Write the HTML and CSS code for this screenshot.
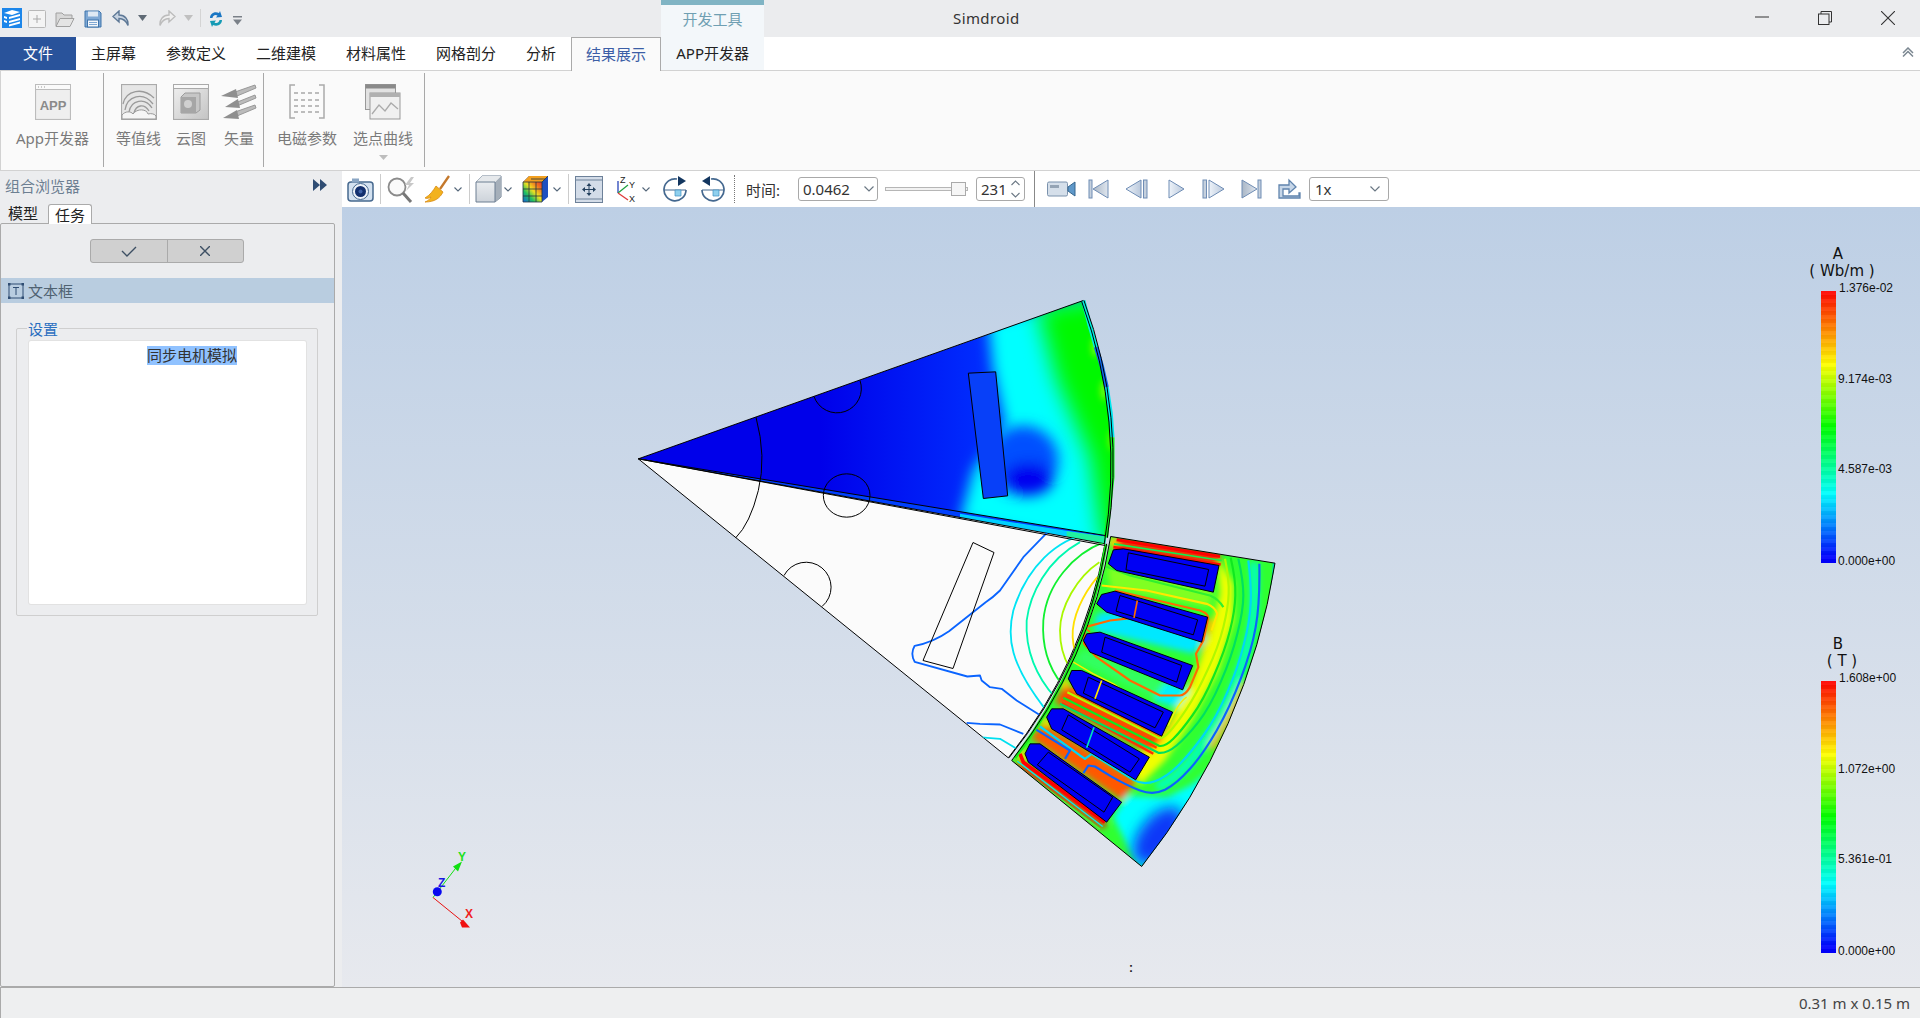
FILE: index.html
```html
<!DOCTYPE html>
<html lang="zh">
<head>
<meta charset="utf-8">
<title>Simdroid</title>
<link rel="stylesheet" href="styles.css">
</head>
<body>
<svg class="defs" width="0" height="0">
  <defs>
    <linearGradient id="navfill" x1="0" y1="0" x2="1" y2="0"><stop offset="0" stop-color="#eef3f9"/><stop offset="1" stop-color="#b9c8dc"/></linearGradient>
    <linearGradient id="navfillr" x1="0" y1="0" x2="1" y2="0"><stop offset="0" stop-color="#a9b6c6"/><stop offset="1" stop-color="#dfe6ee"/></linearGradient>
    <linearGradient id="rainbow" x1="0" y1="1" x2="1" y2="0"><stop offset="0" stop-color="#1060e0"/><stop offset=".3" stop-color="#20c060"/><stop offset=".55" stop-color="#f0e020"/><stop offset=".8" stop-color="#f07020"/><stop offset="1" stop-color="#e03030"/></linearGradient>
    <linearGradient id="cubefront" x1="0" y1="0" x2="0" y2="1"><stop offset="0" stop-color="#f2f4f6"/><stop offset="1" stop-color="#cdd3da"/></linearGradient>
    <linearGradient id="grayfade" x1="0" y1="0" x2="1" y2="1"><stop offset="0" stop-color="#f0f0f0"/><stop offset="1" stop-color="#c4c4c4"/></linearGradient>
    <linearGradient id="rotorbase" gradientUnits="userSpaceOnUse" x1="600" y1="0" x2="1120" y2="0"><stop offset="0" stop-color="#0000ea"/><stop offset="1" stop-color="#0030ff"/></linearGradient>
  </defs>
</svg>
<div class="app">
  <header class="titlebar">
    <div class="qat">
      <svg class="q-logo" viewBox="0 0 20 20"><rect width="20" height="20" fill="#1c86ea"/><path d="M2 5l8-3 8 2-8 3zM2 8l3 1v2l-3-1zM7 9l11-3v2l-11 3zM2 12l3 1v2l-3-1zM7 13l11-3v2l-11 3zM7 16.500l11-3v2l-11 3z" fill="#fff"/></svg>
      <svg class="q-new" viewBox="0 0 18 18"><rect x=".5" y=".5" width="17" height="17" rx="1" fill="#f4f4f4" stroke="#b8b8b8"/><path d="M9 5v8M5 9h8" stroke="#a8a8a8" fill="none"/></svg>
      <svg class="q-open" viewBox="0 0 20 17"><path d="M1 15V2h6l2 2h8v3" fill="#d8d8d8" stroke="#a0a0a0"/><path d="M1 15.500l4-8h14l-4 8z" fill="#e4e4e4" stroke="#a0a0a0"/></svg>
      <svg class="q-save" viewBox="0 0 18 18"><path d="M1 1h14l2 2v14H1z" fill="#7fa8d4" stroke="#3f74ab"/><rect x="4" y="1.500" width="10" height="5" fill="#dfe9f4"/><rect x="3.500" y="10" width="11" height="7" fill="#f4f7fa" stroke="#3f74ab"/><path d="M5 12.500h8M5 14.500h8" stroke="#7fa8d4"/></svg>
      <svg class="q-undo" viewBox="0 0 18 18"><path d="M7 1L1 6.500 7 12V8.500c4 0 7 2 9 7 .5-6-3-10.500-9-10.500z" fill="#c7d3e1" stroke="#5d7896" stroke-width="1.400"/></svg>
      <svg class="q-tri" viewBox="0 0 9 6"><path d="M0 0h9L4.500 6z" fill="#5f6a75"/></svg>
      <svg class="q-redo" viewBox="0 0 18 18"><path d="M11 1l6 5.500L11 12V8.500c-4 0-7 2-9 7-.5-6 3-10.500 9-10.500z" fill="#f0f0f0" stroke="#bcbcbc" stroke-width="1.400"/></svg>
      <svg class="q-tri2" viewBox="0 0 9 6"><path d="M0 0h9L4.500 6z" fill="#c0c0c0"/></svg>
      <span class="q-sep"></span>
      <svg class="q-sync" viewBox="0 0 16 18"><path d="M2 8c0-4 4-7 9-5l1-2 2 6-6 .5 1.500-2C7 4 4.500 6 4.500 8z" fill="#1976c4"/><path d="M14 10c0 4-4 7-9 5l-1 2-2-6 6-.5L6.500 12.500C9 14 11.500 12 11.500 10z" fill="#159bb5"/></svg>
      <svg class="q-more" viewBox="0 0 9 9"><path d="M0 0h9v1.500H0z" fill="#7a8088"/><path d="M0 3.500h9L4.500 9z" fill="#7a8088"/></svg>
    </div>
    <div class="ctx-head">开发工具</div>
    <div class="app-title">Simdroid</div>
    <div class="winctl">
      <svg class="w-min" viewBox="0 0 14 14"><path d="M0 7h14" stroke="#333" fill="none"/></svg>
      <svg class="w-max" viewBox="0 0 14 14"><path d="M3 3V.500h10.500V11H11" stroke="#333" fill="none"/><rect x=".5" y="3" width="10.500" height="10.500" fill="none" stroke="#333"/></svg>
      <svg class="w-close" viewBox="0 0 14 14"><path d="M0 0l14 14M14 0L0 14" stroke="#333" fill="none" stroke-width="1.100"/></svg>
    </div>
  </header>

  <nav class="tabs">
    <div class="tab-file">文件</div>
    <div class="tab">主屏幕</div>
    <div class="tab">参数定义</div>
    <div class="tab">二维建模</div>
    <div class="tab">材料属性</div>
    <div class="tab">网格剖分</div>
    <div class="tab">分析</div>
    <div class="tab tab-active">结果展示</div>
    <div class="tab tab-ctx">APP开发器</div>
    <svg class="collapse" viewBox="0 0 12 10"><path d="M1 6l5-5 5 5M1 9.500l5-5 5 5" fill="none" stroke="#7b8791" stroke-width="1.500"/></svg>
  </nav>

  <section class="ribbon">
    <div class="rgroup rg1">
      <div class="ritem">
        <svg class="ricon" viewBox="0 0 36 36"><rect x=".5" y=".5" width="35" height="35" fill="#efefef" stroke="#bcbcbc" stroke-width="1.200"/><rect x=".5" y=".5" width="35" height="5" fill="#fafafa" stroke="#bcbcbc"/><path d="M3 3h1M6 3h1M9 3h1" stroke="#999"/><text x="18" y="26" class="appglyph">APP</text></svg>
        <span>App开发器</span>
      </div>
    </div>
    <div class="rgroup rg2">
      <div class="ritem">
        <svg class="ricon" viewBox="0 0 36 36"><rect x=".5" y=".5" width="35" height="35" fill="#e6e6e6" stroke="#aaa" stroke-width="1.200"/><path d="M2 20C5 6 22 3 33 14M4 26C6 12 22 7 32 20M8 28c2-12 16-15 23-4M13 29c2-8 10-10 15-2" fill="none" stroke="#9a9a9a" stroke-width="1.300"/><path d="M1 35v-4c3-4 9-4 11-1 4-6 14-5 15 0 3-1 7 0 8 2v3z" fill="#f5f5f5" stroke="#999"/></svg>
        <span>等值线</span>
      </div>
      <div class="ritem">
        <svg class="ricon" viewBox="0 0 36 36"><rect x=".5" y=".5" width="35" height="35" fill="url(#grayfade)" stroke="#aaa" stroke-width="1.200"/><rect x=".5" y=".5" width="35" height="4" fill="#fafafa" stroke="#aaa"/><path d="M8 13l4-4h15v17l-4 3H8z" fill="#c6c6c6" stroke="#9c9c9c"/><path d="M8 13h15v16H8z" fill="#a6a6a6"/><circle cx="15" cy="20" r="4" fill="#d0d0d0"/></svg>
        <span>云图</span>
      </div>
      <div class="ritem">
        <svg class="ricon" viewBox="0 0 36 36"><g fill="#bbb" stroke="#999"><path d="M14 8l20-7 1 3-19 8z"/><path d="M14 19l20-8 1 3-19 8z"/><path d="M14 28l20-7 1 3-19 8z"/></g><g fill="#8f8f8f"><path d="M0 12l15-7 2 9z"/><path d="M4 23l13-8 2 9z"/><path d="M2 34l14-8 2 9z"/></g></svg>
        <span>矢量</span>
      </div>
    </div>
    <div class="rgroup rg3">
      <div class="ritem">
        <svg class="ricon" viewBox="0 0 36 36"><path d="M6 1H1v33h5M30 1h5v33h-5" fill="none" stroke="#aaa" stroke-width="1.500"/><path d="M5 9h26M5 16h26M5 22h26M5 28h26" stroke="#a8a8a8" stroke-width="1.400" stroke-dasharray="4 3" fill="none"/></svg>
        <span>电磁参数</span>
      </div>
      <div class="ritem">
        <svg class="ricon" viewBox="0 0 36 36"><rect x=".5" y=".5" width="30" height="25" fill="#e2e2e2" stroke="#999"/><rect x=".5" y=".5" width="30" height="4" fill="#8a8a8a"/><rect x="5" y="9" width="30" height="26" fill="#f0f0f0" stroke="#999"/><rect x="5" y="9" width="30" height="4" fill="#b0b0b0"/><path d="M7 30l7-9 6 6 6-8 7 6" fill="none" stroke="#aaa" stroke-width="1.300"/></svg>
        <span>选点曲线</span>
        <svg class="rdrop" viewBox="0 0 9 5"><path d="M0 0h9L4.500 5z" fill="#bdbdbd"/></svg>
      </div>
    </div>
  </section>

  <main class="main">
    <aside class="dock">
      <div class="dock-head">
        <span>组合浏览器</span>
        <svg class="dock-arrows" viewBox="0 0 14 12"><path d="M0 0l7 6-7 6zM7 0l7 6-7 6z" fill="#2f4d73"/></svg>
      </div>
      <div class="dock-tabs">
        <span class="dtab">模型</span>
        <span class="dtab dtab-on">任务</span>
      </div>
      <div class="dock-box">
        <div class="btnpair">
          <div class="okbtn"><svg class="glyph-ok" viewBox="0 0 16 11"><path d="M1 5l5 5 9-9" fill="none" stroke="#3d4f63" stroke-width="1.400"/></svg></div>
          <div class="okbtn"><svg class="glyph-x" viewBox="0 0 10 10"><path d="M0 0l10 10M10 0L0 10" fill="none" stroke="#3d4f63" stroke-width="1.400"/></svg></div>
        </div>
        <div class="taskbar">
          <svg class="t-icon" viewBox="0 0 16 16"><rect x="1" y="1" width="14" height="14" fill="none" stroke="#2f4d73"/><g fill="#2f4d73"><rect width="2.500" height="2.500"/><rect x="13.500" width="2.500" height="2.500"/><rect y="13.500" width="2.500" height="2.500"/><rect x="13.500" y="13.500" width="2.500" height="2.500"/></g><path d="M5 4.500h6M8 4.500v7.500" stroke="#2f4d73" fill="none"/></svg>
          <span>文本框</span>
        </div>
        <div class="group">
          <div class="legend">设置</div>
          <div class="textedit"><span class="selected">同步电机模拟</span></div>
        </div>
      </div>
    </aside>

    <div class="work">
      <div class="toolbar">
        <svg class="ti s-cam" viewBox="0 0 27 25"><rect x="1" y="5" width="25" height="19" rx="3" fill="#d3e1f0" stroke="#47698f" stroke-width="1.500"/><rect x="5" y="1.500" width="7" height="4" fill="#8aa6c4"/><circle cx="13.500" cy="14.500" r="8" fill="#eef3f9" stroke="#47698f"/><circle cx="13.500" cy="14.500" r="5.500" fill="#13306e"/><circle cx="13.500" cy="14.500" r="2" fill="#3f63a8"/></svg>
        <span class="vsep"></span>
        <svg class="ti s-mag" viewBox="0 0 29 27"><circle cx="10" cy="11" r="8.500" fill="#fafafa" stroke="#8b8b8b" stroke-width="1.800"/><path d="M16 17l8 9" stroke="#777" stroke-width="3" fill="none"/><path d="M24 1l-6 8h4l-3 6 8-8h-4l4-6z" fill="#c8c8c8"/></svg>
        <svg class="ti s-broom" viewBox="0 0 26 28"><path d="M25 1l-9 13" stroke="#c4782b" stroke-width="2.300" fill="none"/><path d="M12 11l7 6c-3 6-8 10-18 10 3-1 5-3 6-5-2 1-4 2-6 1 5-3 8-7 11-12z" fill="#f2b21e" stroke="#d88a14" stroke-width=".8"/></svg>
        <svg class="chev" viewBox="0 0 8 5"><path d="M.5.500L4 4 7.500.500" fill="none" stroke="#55677a" stroke-width="1.100"/></svg>
        <span class="vsep"></span>
        <svg class="ti s-cube" viewBox="0 0 27 28"><path d="M1 7l6-6h19v21l-6 5H1z" fill="url(#cubefront)" stroke="#6d7f92"/><path d="M20 7l6-6v21l-6 5z" fill="#a5afba"/><path d="M1 7l6-6h19l-6 6z" fill="#e6e9ec"/><path d="M1 7h19v20" fill="none" stroke="#6d7f92"/></svg>
        <svg class="chev" viewBox="0 0 8 5"><path d="M.5.500L4 4 7.500.500" fill="none" stroke="#55677a" stroke-width="1.100"/></svg>
        <svg class="ti s-cube" viewBox="0 0 27 28"><path d="M1 7l6-6h19v21l-6 5H1z" fill="#1e4fc0"/><path d="M1 7h19v20H1z" fill="url(#rainbow)"/><path d="M1 7l6-6h19l-6 6z" fill="#f2a020"/><path d="M1 14h19M1 21h19M7 7v20M14 7v20M20 7l6-6M9 4h14" stroke="#24323f" fill="none" stroke-width=".8"/><path d="M1 7h19v20H1z" fill="none" stroke="#24323f" stroke-width=".8"/></svg>
        <svg class="chev" viewBox="0 0 8 5"><path d="M.5.500L4 4 7.500.500" fill="none" stroke="#55677a" stroke-width="1.100"/></svg>
        <span class="vsep"></span>
        <svg class="ti s-fit" viewBox="0 0 28 27"><rect x=".5" y=".5" width="27" height="26" fill="#d3dce8" stroke="#6d8199"/><path d="M.5 4h27M.5 23h27" stroke="#6d8199" fill="none"/><path d="M14 7l2.500 3h-5zM14 20l2.500-3h-5zM7 13.500l3-2.500v5zM21 13.500L18 11v5z" fill="#24415f"/><path d="M14 10v7M10 13.500h8" stroke="#24415f" fill="none"/></svg>
        <svg class="ti s-axis" viewBox="0 0 25 30"><path d="M5 19V7" stroke="#2744b8" stroke-width="1.300" fill="none"/><path d="M5 19l10-8" stroke="#1ca03c" stroke-width="1.300" fill="none"/><path d="M5 19l10 7" stroke="#e03a3a" stroke-width="1.300" fill="none"/><text x="7" y="9" class="axglyph">Z</text><text x="16" y="14" class="axglyph">Y</text><text x="16" y="28" class="axglyph">X</text></svg>
        <svg class="chev" viewBox="0 0 8 5"><path d="M.5.500L4 4 7.500.500" fill="none" stroke="#55677a" stroke-width="1.100"/></svg>
        <svg class="ti s-rot" viewBox="0 0 26 26"><path d="M15 3A11 11 0 1 0 24 14" fill="none" stroke="#44688f" stroke-width="1.700"/><path d="M16 0l8 5-8 5z" fill="#13365f"/><path d="M2 14h22" stroke="#44688f"/><path d="M13 14h6v6h-6z" fill="#8fd0ee" stroke="#3f8fc0" stroke-width=".7"/></svg>
        <svg class="ti s-rot" viewBox="0 0 26 26"><path d="M11 3A11 11 0 1 1 2 14" fill="none" stroke="#44688f" stroke-width="1.700"/><path d="M10 0L2 5l8 5z" fill="#13365f"/><path d="M2 14h22" stroke="#44688f"/><path d="M13 14h6v6h-6z" fill="#8fd0ee" stroke="#3f8fc0" stroke-width=".7"/></svg>
        <span class="dotsep"></span>
        <span class="tlabel">时间:</span>
        <div class="combo combo-time"><span>0.0462</span><svg class="cchev" viewBox="0 0 10 6"><path d="M.5.500L5 5 9.500.500" fill="none" stroke="#6b7884" stroke-width="1.200"/></svg></div>
        <div class="slider"><div class="strack"></div><div class="shandle"></div></div>
        <div class="spin"><span>231</span><svg class="sarrows" viewBox="0 0 9 18"><path d="M.5 5L4.500 1l4 4M.5 13l4 4 4-4" fill="none" stroke="#6b7884" stroke-width="1.100"/></svg></div>
        <span class="vsep vsep-long"></span>
        <svg class="ti s-video" viewBox="0 0 29 16"><rect x=".5" y="1" width="20" height="14" rx="1.500" fill="#d5dfea" stroke="#7b92ad"/><rect x="3" y="4" width="9" height="3" fill="#95a4b5"/><path d="M21 6l7-5v14l-7-5z" fill="#5f98c9" stroke="#36678f"/></svg>
        <svg class="ti s-nav" viewBox="0 0 21 20"><rect x="1" y="1" width="3" height="18" fill="#c5d0dd" stroke="#6f8db5"/><path d="M20 1v18L5 10z" fill="url(#navfillr)" stroke="#6f8db5"/></svg>
        <svg class="ti s-nav2" viewBox="0 0 23 20"><path d="M16 1v18L1 10z" fill="url(#navfill)" stroke="#6f8db5"/><rect x="18.500" y="1" width="3.500" height="18" fill="#c5d0dd" stroke="#6f8db5"/></svg>
        <svg class="ti s-play" viewBox="0 0 18 20"><path d="M1 1v18l15-9z" fill="url(#navfill)" stroke="#6f8db5"/></svg>
        <svg class="ti s-nav2" viewBox="0 0 23 20"><rect x="1" y="1" width="3.500" height="18" fill="#c5d0dd" stroke="#6f8db5"/><path d="M7 1v18l15-9z" fill="url(#navfill)" stroke="#6f8db5"/></svg>
        <svg class="ti s-nav" viewBox="0 0 21 20"><path d="M1 1v18l15-9z" fill="url(#navfillr)" stroke="#6f8db5"/><rect x="17" y="1" width="3" height="18" fill="#c5d0dd" stroke="#6f8db5"/></svg>
        <svg class="ti s-exp" viewBox="0 0 23 22"><path d="M1 7h10V2l7 7-7 6v-4H5v7h16v-3h1v5H1z" fill="#c6d6e8" stroke="#6084ad" stroke-width="1.300"/></svg>
        <div class="combo combo-speed"><span>1x</span><svg class="cchev" viewBox="0 0 10 6"><path d="M.5.500L5 5 9.500.500" fill="none" stroke="#6b7884" stroke-width="1.200"/></svg></div>
      </div>

      <div class="viewport">
        <svg class="scene" viewBox="342 207 1578 779">
          <defs>
            <filter id="blur6" filterUnits="userSpaceOnUse" x="-300" y="-300" width="2400" height="2000"><feGaussianBlur stdDeviation="32"/></filter>
            <filter id="blur4" filterUnits="userSpaceOnUse" x="-300" y="-300" width="2400" height="2000"><feGaussianBlur stdDeviation="20"/></filter>
            <filter id="blur2" filterUnits="userSpaceOnUse" x="-300" y="-300" width="2400" height="2000"><feGaussianBlur stdDeviation="10"/></filter>
            <clipPath id="rotorclip"><path d="M55 505L1390 30A1420 1420 0 0 1 1455 765Z"/></clipPath>
            <clipPath id="statorclip"><path d="M392 48L885 128A1940 1940 0 0 1 485 1038L95 720A1438 1438 0 0 0 392 48Z"/></clipPath>
            <clipPath id="whiteclip"><path d="M-1025-185L375 70A1428 1428 0 0 1 85 712Z"/></clipPath>
          </defs>

          <!-- rotor: field sector -->
          <g transform="translate(620 290) scale(.33333)">
            <g clip-path="url(#rotorclip)">
              <path d="M55 505L1390 30A1420 1420 0 0 1 1455 765Z" fill="url(#rotorbase)"/>
              <path d="M1105 90L1118 230 1155 400 1060 540 1020 690 1520 790 1520 0z" fill="#00ffff" filter="url(#blur4)"/>
              <path d="M1250 50L1310 270 1410 500 1450 770 1560 770 1560 0z" fill="#00f800" filter="url(#blur6)"/>
              <g filter="url(#blur4)">
                <ellipse cx="1210" cy="510" rx="105" ry="105" fill="#0050ff"/>
                <ellipse cx="1225" cy="565" rx="75" ry="50" fill="#0000f0"/>
              </g>
              <g filter="url(#blur2)" fill="#80ff10">
                <ellipse cx="1425" cy="170" rx="10" ry="30"/>
                <ellipse cx="1452" cy="300" rx="10" ry="30"/>
                <ellipse cx="1475" cy="450" rx="8" ry="30"/>
              </g>
              <path d="M55 505L1455 735 1455 765Z" fill="#0040ff"/>
              <path d="M1020 670L1300 715 1455 738 1455 765 1020 690z" fill="#00d0ff"/>
              <path d="M1340 722L1455 738 1455 765 1340 745z" fill="#20f0a0"/>
            </g>
            <path d="M1390 30L1408 100 1428 170" fill="none" stroke="#00f0e0" stroke-width="13"/>
            <path d="M1428 170L1445 225 1460 290" fill="none" stroke="#0f6cf0" stroke-width="13"/>
            <path d="M1460 290L1472 370 1477 440" fill="none" stroke="#00e8f0" stroke-width="13"/>
            <path d="M1477 440L1477 560 1458 740" fill="none" stroke="#10f020" stroke-width="13"/>
            <path d="M1045 248L1127 244 1163 616 1090 624z" fill="#0840f8" stroke="#000" stroke-width="3"/>
            <g fill="none" stroke="#000" stroke-width="3">
              <path d="M55 505L1390 30"/>
              <path d="M55 505L1455 735"/>
              <path d="M1385 33A1412 1412 0 0 1 1452 765"/>
              <path d="M1392 30A1430 1430 0 0 1 1462 742"/>
              <path d="M582 318A70 70 0 0 0 720 270"/>
            </g>
          </g>

          <!-- white half and stator -->
          <g transform="translate(980 520) scale(.33333)">
            <path d="M-1025-185L375 70A1428 1428 0 0 1 85 712Z" fill="#fbfbfb" stroke="#000" stroke-width="3"/>
            <g clip-path="url(#whiteclip)" fill="none" stroke-width="5.500" stroke-linejoin="round">
              <path d="M215 22L130 110 60 210Q40 230 17 245L-93 332Q-140 365 -196 376Q-210 400 -196 424L-38 468 0 465 5 480 30 500 65 505 110 540 190 590" stroke="#0a64ff"/>
              <path d="M-40 607L0 610 60 612 130 640" stroke="#0a64ff"/>
              <path d="M-5 650L60 655 110 685" stroke="#00e0f0"/>
              <path d="M332 38C230 55 140 140 100 270C80 350 90 430 195 565" stroke="#00e4f4"/>
              <path d="M300 65C200 120 150 220 140 300C135 390 170 470 225 530" stroke="#00f8b0"/>
              <path d="M372 65C280 100 200 190 190 300C185 380 205 440 245 490" stroke="#10f030"/>
              <path d="M358 125C290 170 240 260 240 330C240 380 250 410 268 440" stroke="#a8f800"/>
              <path d="M352 170C310 220 275 290 278 350C280 380 285 400 295 415" stroke="#ffe000"/>
            </g>

            <g clip-path="url(#statorclip)">
              <rect x="-20" y="-20" width="1000" height="1100" fill="#30ff30"/>
              <g filter="url(#blur2)">
                <path d="M712 110L760 190 760 300 715 450 635 600 555 720 480 795 450 725 560 620 640 470 690 340 720 220z" fill="#f0ff00"/>
                <path d="M700 300L640 480 560 640 530 660 600 560 660 420 680 290z" fill="#ffa000"/>
                <path d="M400 890L440 825 560 830 640 790 750 700 720 800 480 1050z" fill="#00ffff"/>
                <path d="M380 135L700 210 690 260 390 205z" fill="#80ff20"/>
                <path d="M350 280L410 270 680 350 640 400 340 330z" fill="#00e8ff"/>
                <path d="M310 385L620 510 580 560 280 420z" fill="#30ff60"/>
                <path d="M560 480L630 510 590 560 520 540z" fill="#00f0ff"/>
                <path d="M255 490L550 650 510 700 225 545z" fill="#ff4800"/>
                <path d="M195 610L470 780 425 840 150 650z" fill="#ff5800"/>
                <path d="M400 50L720 100 715 135 400 85z" fill="#ff2000"/>
                <path d="M120 720L380 905 370 925 105 735z" fill="#ff1000"/>
                <path d="M790 480L800 500 770 570 700 690 685 680 762 540z" fill="#ffb000"/>
                <ellipse cx="130" cy="705" rx="15" ry="18" fill="#ffe000"/>
                <ellipse cx="198" cy="605" rx="14" ry="14" fill="#ffe000"/>
                <ellipse cx="255" cy="490" rx="14" ry="14" fill="#ffd000"/>
                <ellipse cx="400" cy="65" rx="14" ry="14" fill="#ffe000"/>
                <path d="M822 125Q828 250 815 330Q800 400 765 495Q730 585 690 640Q650 705 610 745Q570 785 530 800" fill="none" stroke="#00ffc0" stroke-width="26"/>
              </g>
              <ellipse cx="535" cy="945" rx="55" ry="100" transform="rotate(38 535 945)" fill="#0838f8" filter="url(#blur4)"/>
              <path d="M885 128L880 200" stroke="#00e0a0" stroke-width="14" fill="none"/>

              <g fill="none" stroke-linejoin="round" stroke-width="6.500">
                <polyline points="410,58 720,108" stroke="#ff0000" stroke-width="9"/>
                <polyline points="402,70 725,120" stroke="#10f050" stroke-width="5"/>
                <polyline points="400,80 722,132" stroke="#ff1000" stroke-width="8"/>
                <polyline points="395,92 410,90" stroke="#30f060" stroke-width="4"/>
                <polyline points="120,700 130,725 375,905" stroke="#ff0000" stroke-width="11"/>
                <polyline points="112,722 368,918" stroke="#00f0f0" stroke-width="4"/>
                <polyline points="100,728 360,926" stroke="#40ff40" stroke-width="4"/>
                <polyline points="272,506 540,650" stroke="#ff7000" stroke-width="9"/>
                <polyline points="258,530 530,682" stroke="#ff4000" stroke-width="7"/>
                <polyline points="245,548 520,700" stroke="#ff3000" stroke-width="7"/>
                <path d="M735 115Q748 180 746 220Q745 260 730 320Q715 380 682 450Q650 520 620 565Q590 610 570 632Q550 655 535 652L262 515" stroke="#b0f800"/>
                <path d="M752 112Q768 180 766 225Q765 270 750 330Q735 390 702 465Q670 540 637 585Q605 630 580 655Q555 680 537 676L250 532" stroke="#10e820"/>
                <path d="M775 115Q790 180 790 225Q790 270 772 340Q755 410 722 485Q690 560 655 605Q620 650 590 675Q560 700 535 697L240 550" stroke="#00e060"/>
                <path d="M805 120Q815 200 812 250Q810 300 792 370Q775 440 742 515Q710 590 670 645Q630 700 595 735Q560 770 525 782Q490 795 460 778L335 700 315 715 300 705 180 618" stroke="#00d8f4"/>
                <path d="M838 130Q840 250 827 320Q815 390 782 475Q750 560 710 630Q670 700 630 745Q590 790 555 808Q520 825 480 810Q440 795 392 767L345 738 325 735 310 758" stroke="#0a64ff"/>
                <polyline points="165,625 270,690 255,715" stroke="#0a64ff"/>
                <path d="M378 138L450 165 690 225Q715 235 730 260" stroke="#30f030"/>
                <path d="M365 195L500 210 680 250Q705 260 712 280L695 330" stroke="#ffe800"/>
                <path d="M405 210L660 270Q690 280 683 300L670 360 648 400 655 440 630 500Q615 525 600 525L540 525 450 480 350 410 312 370 315 320 390 300 460 292" stroke="#ff6a00"/>
                <polyline points="280,425 340,460 400,490 560,595" stroke="#ffe800" stroke-width="4"/>
                <path d="M620 530Q595 545 565 615" stroke="#f8f000" stroke-width="4"/>
              </g>

              <g fill="#0000f4" stroke="#000" stroke-width="3" stroke-linejoin="round">
                <path d="M400 88L430 85 717 135 700 215 410 150 385 130z"/>
                <path d="M365 222L405 212 683 290 665 365 380 275 350 250z"/>
                <path d="M320 340L360 335 638 435 608 508 330 395 310 360z"/>
                <path d="M275 450L305 450 578 575 545 647 290 520 265 475z"/>
                <path d="M215 565L250 565 508 710 467 778 215 625 200 590z"/>
                <path d="M150 670L180 670 425 845 380 905 145 725 135 700z"/>
              </g>
              <g fill="none" stroke="#000" stroke-width="3" stroke-linejoin="round">
                <path d="M445 97L686 147 675 197 438 148z"/>
                <path d="M420 225L653 298 640 343 408 272z"/>
                <path d="M375 350L605 435 590 485 365 395z"/>
                <path d="M325 470L550 575 525 622 310 518z"/>
                <path d="M265 583L478 715 450 755 245 628z"/>
                <path d="M205 695L398 830 372 875 172 733z"/>
              </g>
              <g fill="none" stroke-width="5">
                <path d="M472 240L462 292" stroke="#ff6a00"/>
                <path d="M365 480L345 535" stroke="#ffe800"/>
                <path d="M342 620L320 682" stroke="#00e0c0"/>
                <path d="M312 320L330 335" stroke="#ff6a00"/>
              </g>
            </g>
            <path d="M378 72A1448 1448 0 0 1 105 712" fill="none" stroke="#18f018" stroke-width="9"/>
            <path d="M392 48L885 128A1940 1940 0 0 1 485 1038L95 720" fill="none" stroke="#000" stroke-width="3"/>
            <path d="M392 48A1438 1438 0 0 1 95 720" fill="none" stroke="#000" stroke-width="3"/>
            <path d="M380 70A1424 1424 0 0 1 87 712" fill="none" stroke="#000" stroke-width="3"/>
          </g>

          <!-- rotor outlines that lie across both halves -->
          <g transform="translate(620 290) scale(.33333)" fill="none" stroke="#000" stroke-width="3">
            <path d="M55 505L1455 765"/>
            <ellipse cx="680" cy="615" rx="70" ry="65"/>
            <path d="M408 380Q440 500 415 600T347 742"/>
          </g>
          <g fill="none" stroke="#000" stroke-width="1">
            <path d="M973 542L994 552 953 668 923 660z"/>
            <path d="M784 575A25 25 0 1 1 822 606"/>
          </g>

          <!-- axes triad -->
          <g>
            <path d="M433 897L457 866" stroke="#10e010" fill="none"/>
            <path d="M433 897L465 923" stroke="#e81010" fill="none"/>
            <path d="M453 866L462 861 458 871z" fill="#10e010"/>
            <path d="M460 922L463 919 470 927 462 927z" fill="#f01010"/>
            <circle cx="437.300" cy="891.300" r="4.500" fill="#0808f0"/>
            <text x="438" y="886" class="ax ax-z">Z</text>
            <text x="458" y="860" class="ax ax-y">Y</text>
            <text x="465" y="917" class="ax ax-x">X</text>
          </g>
        </svg>

        <div class="legendbar legend-a">
          <div class="lg-title"><span class="lg-name">A</span><br>( Wb/m )</div>
          <div class="lg-bar"></div>
          <span class="lg-t lg-t1">1.376e-02</span>
          <span class="lg-t lg-t2">9.174e-03</span>
          <span class="lg-t lg-t3">4.587e-03</span>
          <span class="lg-t lg-t4">0.000e+00</span>
        </div>
        <div class="legendbar legend-b">
          <div class="lg-title"><span class="lg-name">B</span><br>( T )</div>
          <div class="lg-bar"></div>
          <span class="lg-t lg-t1">1.608e+00</span>
          <span class="lg-t lg-t2">1.072e+00</span>
          <span class="lg-t lg-t3">5.361e-01</span>
          <span class="lg-t lg-t4">0.000e+00</span>
        </div>
        <span class="dotmark">:</span>
      </div>
    </div>
  </main>

  <footer class="status"><span>0.31 m x 0.15 m</span></footer>
</div>
</body>
</html>
```

FILE: styles.css
```css
* { box-sizing: border-box; }
html, body { margin: 0; padding: 0; }
body {
  width: 1920px;
  height: 1018px;
  overflow: hidden;
  font-family: "Noto Sans", "Noto Sans CJK SC", sans-serif;
  font-size: 15px;
  color: #222;
  background: #ecedef;
}
.defs { position: absolute; }
.app { display: flex; flex-direction: column; height: 1018px; }
svg { display: block; flex: none; }

/* title bar */
.titlebar { height: 37px; display: flex; background: #ebecee; flex: none; }
.qat { width: 661px; display: flex; align-items: flex-start; }
.q-logo { width: 20px; height: 20px; margin: 8px 0 0 2px; }
.q-new { width: 18px; height: 18px; margin: 10px 0 0 6px; }
.q-open { width: 20px; height: 17px; margin: 11px 0 0 9px; }
.q-save { width: 18px; height: 18px; margin: 10px 0 0 9px; }
.q-undo { width: 18px; height: 18px; margin: 10px 0 0 10px; }
.q-tri { width: 9px; height: 6px; margin: 15px 0 0 8px; }
.q-redo { width: 18px; height: 18px; margin: 10px 0 0 11px; }
.q-tri2 { width: 9px; height: 6px; margin: 15px 0 0 8px; }
.q-sep { width: 1px; height: 18px; margin: 9px 0 0 7px; background: #d4d4d4; }
.q-sync { width: 16px; height: 18px; margin: 10px 0 0 7px; }
.q-more { width: 9px; height: 9px; margin: 16px 0 0 9px; }
.ctx-head {
  width: 103px;
  background: #f3f7fa;
  border-top: 5px solid #80b4c4;
  color: #6f9fb2;
  text-align: center;
  line-height: 28px;
}
.app-title {
  margin-left: 189px;
  line-height: 37px;
  font-family: "Noto Sans", sans-serif;
  font-size: 15px;
  letter-spacing: .4px;
  color: #333;
}
.winctl { margin-left: auto; display: flex; align-items: flex-start; }
.w-min { width: 14px; height: 14px; margin: 10px 0 0; }
.w-max { width: 14px; height: 14px; margin: 11px 0 0 49px; }
.w-close { width: 14px; height: 14px; margin: 11px 25px 0 49px; }

/* ribbon tabs */
.tabs { height: 33px; display: flex; background: #fff; flex: none; position: relative; }
.tab-file {
  width: 76px;
  background: #29539b;
  color: #fff;
  text-align: center;
  line-height: 33px;
}
.tab { padding: 0 15px; line-height: 33px; color: #222; white-space: nowrap; }
.tab-active {
  height: 34px;
  padding: 0 14px;
  line-height: 32px;
  background: #fafafa;
  color: #3c5ea6;
  border: 1px solid #aaa;
  border-bottom: 0;
  position: relative;
  z-index: 2;
}
.tab-ctx { background: #f3f7fa; width: 103px; padding: 0; text-align: center; }
.collapse { width: 12px; height: 10px; margin: 10px 6px 0 auto; }

/* ribbon body */
.ribbon {
  height: 101px;
  display: flex;
  flex: none;
  background: #fafafa;
  border-top: 1px solid #d2d2d2;
  border-bottom: 1px solid #d2d2d2;
  border-left: 1px solid #d2d2d2;
}
.rgroup { display: flex; height: 94px; margin-top: 2px; border-right: 1px solid #a8a8a8; flex: none; }
.rg1 { width: 103px; padding-left: 15px; }
.rg2 { width: 160px; padding-left: 12px; gap: 12px; }
.rg3 { width: 161px; padding-left: 13px; gap: 16px; }
.ritem { display: flex; flex-direction: column; align-items: center; color: #7a7a7a; line-height: 20px; flex: none; white-space: nowrap; }
.ricon { width: 36px; height: 36px; margin: 11px 0 8px; }
.rdrop { width: 9px; height: 5px; margin-top: 7px; }
.appglyph { font: bold 13px "Liberation Sans", sans-serif; fill: #8a8a8a; text-anchor: middle; }

/* main */
.main { flex: 1; display: flex; min-height: 0; }
.dock { width: 342px; flex: none; display: flex; flex-direction: column; background: #ecedef; }
.dock-head {
  height: 33px;
  flex: none;
  display: flex;
  align-items: center;
  padding: 0 15px 5px 5px;
  justify-content: space-between;
  color: #6d7f92;
}
.dock-arrows { width: 14px; height: 12px; }
.dock-tabs { height: 20px; flex: none; display: flex; padding-left: 8px; position: relative; z-index: 2; }
.dtab { line-height: 19px; width: 40px; color: #222; }
.dtab-on {
  width: 44px;
  background: #fff;
  border: 1px solid #aaa;
  border-bottom: 0;
  border-radius: 3px 3px 0 0;
  text-align: center;
  height: 20px;
  line-height: 21px;
}
.dock-box {
  width: 335px;
  flex: 1;
  margin-top: -1px;
  border: 1px solid #aaa;
  border-radius: 2px;
  background: #ecedef;
}
.btnpair {
  display: flex;
  width: 154px;
  height: 24px;
  margin: 15px 0 0 89px;
  background: #d0d0d0;
  border: 1px solid #aaa;
  border-radius: 3px;
}
.okbtn { flex: 1; display: flex; align-items: center; justify-content: center; }
.okbtn + .okbtn { border-left: 1px solid #aaa; }
.glyph-ok { width: 16px; height: 11px; }
.glyph-x { width: 10px; height: 10px; }
.taskbar {
  height: 25px;
  margin-top: 15px;
  background: #b9cde0;
  display: flex;
  align-items: center;
  padding-left: 7px;
  gap: 4px;
  color: #4f6272;
}
.t-icon { width: 16px; height: 16px; }
.group {
  width: 302px;
  height: 288px;
  margin: 25px 0 0 15px;
  border: 1px solid #cfcfcf;
  border-radius: 2px;
}
.legend {
  width: fit-content;
  margin: -10px 0 0 10px;
  padding: 0 1px;
  height: 20px;
  line-height: 20px;
  background: #ecedef;
  color: #2a6fc0;
}
.textedit {
  width: 277px;
  height: 263px;
  margin: 2px 0 0 12px;
  background: #fff;
  border-radius: 2px;
  box-shadow: 0 0 0 1px #e2e2e2;
  padding: 4px 0 0 118px;
}
.selected { background: #90c2ff; color: #333; line-height: 19px; display: inline-block; }

/* toolbar */
.work { flex: 1; display: flex; flex-direction: column; min-width: 0; }
.toolbar {
  height: 36px;
  flex: none;
  background: #fff;
  padding-left: 5px;
  display: grid;
  grid-template-columns: 33px 7px 37px 30px 15px 6px 29px 18px 31px 15px 7px 38px 29px 20px 38px 34px 12px 52px 87px 91px 58px 13px 41px 37px 43px 34px 39px 37px 31px 1fr;
  align-items: center;
  justify-items: start;
  color: #333;
}
.s-cam { width: 27px; height: 25px; }
.s-mag { width: 29px; height: 27px; }
.s-broom { width: 26px; height: 28px; }
.s-cube { width: 27px; height: 28px; }
.s-fit { width: 28px; height: 27px; }
.s-axis { width: 25px; height: 30px; }
.s-rot { width: 26px; height: 26px; }
.s-video { width: 29px; height: 16px; }
.s-nav { width: 21px; height: 20px; }
.s-nav2 { width: 23px; height: 20px; }
.s-play { width: 18px; height: 20px; }
.s-exp { width: 23px; height: 22px; }
.chev { width: 8px; height: 5px; }
.vsep { width: 1px; height: 30px; background: #ccc; }
.vsep-long { background: #888; height: 36px; }
.dotsep { width: 0; height: 28px; border-left: 1px dotted #777; }
.tlabel { font-size: 15px; }
.combo {
  display: flex;
  align-items: center;
  justify-content: space-between;
  height: 24px;
  border: 1px solid #a9a9a9;
  border-radius: 3px;
  background: #fff;
  font: 15px "Noto Sans", sans-serif;
  color: #333;
}
.combo-time { width: 80px; padding: 0 3px 0 4px; }
.combo-speed { width: 80px; padding: 0 8px 0 5px; }
.cchev { width: 10px; height: 6px; }
.slider { width: 83px; height: 16px; display: flex; align-items: center; }
.strack { width: 100%; height: 4px; background: #f2f2f2; border: 1px solid #b6b6b6; flex: none; }
.shandle { width: 15px; height: 14px; flex: none; margin-left: -17px; background: #f6f6f6; border: 1px solid #aaa; }
.spin {
  width: 49px;
  height: 24px;
  display: flex;
  align-items: center;
  justify-content: space-between;
  padding: 0 4px;
  border: 1px solid #a9a9a9;
  border-radius: 3px;
  font: 15px "Noto Sans", sans-serif;
}
.sarrows { width: 9px; height: 18px; }

/* 3D view */
.viewport {
  flex: 1;
  position: relative;
  overflow: hidden;
  background: linear-gradient(#bdcfe5, #e7e9ee);
}
.scene { position: absolute; inset: 0; width: 100%; height: 100%; }
.ax { font: bold 12px "Liberation Sans", sans-serif; }
.ax-z { fill: #1818e0; }
.ax-y { fill: #20e020; }
.ax-x { fill: #f02020; }
.axglyph { font: 9px "Liberation Sans", sans-serif; fill: #222; }

.legendbar { position: absolute; left: 1460px; width: 115px; height: 320px; font-family: "Liberation Sans", sans-serif; color: #111; }
.legend-a { top: 37px; }
.legend-b { top: 427px; }
.lg-title {
  position: absolute;
  left: 0;
  width: 80px;
  top: 2px;
  text-align: center;
  font: 15px/17px "DejaVu Sans", sans-serif;
}
.lg-name { position: relative; left: -4px; }
.lg-bar {
  position: absolute;
  left: 19px;
  top: 47px;
  width: 15px;
  height: 272px;
  background:
    repeating-linear-gradient(rgba(255, 255, 255, .06) 0 4px, rgba(0, 0, 0, .03) 4px 8px),
    linear-gradient(#ff0000 0, #ffff00 27%, #00ff00 50%, #00ffff 74.500%, #0000ff 98%);
}
.lg-t { position: absolute; left: 37px; font-size: 12px; line-height: 14px; }
.lg-t1 { top: 37px; }
.lg-t2 { top: 128px; left: 36px; }
.lg-t3 { top: 218px; left: 36px; }
.lg-t4 { top: 310px; left: 36px; }
.dotmark { position: absolute; left: 787px; top: 754px; font: bold 12px "Liberation Sans", sans-serif; color: #222; }

/* status bar */
.status {
  height: 31px;
  flex: none;
  background: #eeeff0;
  border-top: 1px solid #aaa;
  border-left: 1px solid #aaa;
  display: flex;
  align-items: center;
  justify-content: flex-end;
  padding-right: 10px;
  font: 15px "Noto Sans", sans-serif;
  color: #444;
}
```
